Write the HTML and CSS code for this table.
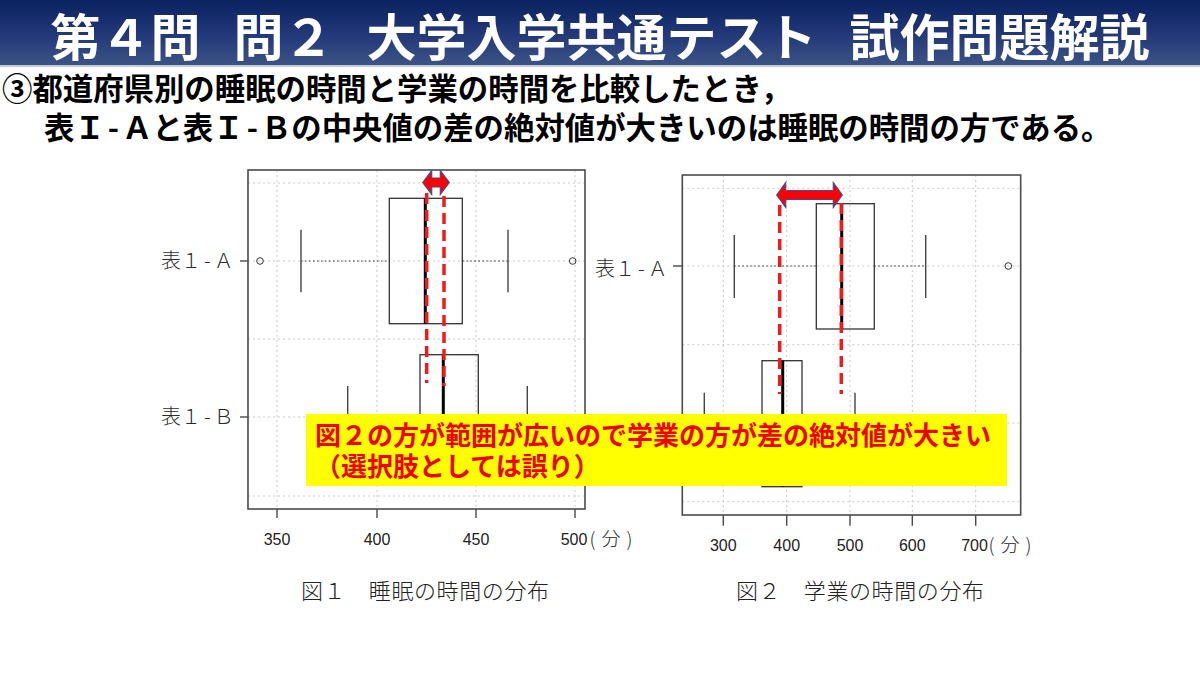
FILE: index.html
```html
<!DOCTYPE html>
<html lang="ja">
<head>
<meta charset="utf-8">
<title>第４問 問２ 大学入学共通テスト 試作問題解説</title>
<link rel="stylesheet" href="styles.css">
</head>
<body>
<header class="title-bar">
  <h1 class="title">第４問<span class="sp">　</span>問２<span class="sp">　</span>大学入学共通テスト<span class="sp">　</span>試作問題解説</h1>
</header>
<section class="statement">
  <p class="line">③都道府県別の睡眠の時間と学業の時間を比較したとき，</p>
  <p class="line indent">表Ｉ<span class="hy">-</span>Ａと表Ｉ<span class="hy">-</span>Ｂの中央値の差の絶対値が大きいのは睡眠の時間の方である。</p>
</section>
<section class="figs">
  <figure class="fig fig1">
    <svg class="plot" viewBox="150 160 440 410" width="440" height="410">
      <g class="grid">
        <line x1="277" y1="171" x2="277" y2="510"/>
        <line x1="377" y1="171" x2="377" y2="510"/>
        <line x1="476" y1="171" x2="476" y2="510"/>
        <line x1="575" y1="171" x2="575" y2="510"/>
        <line x1="248" y1="184" x2="585" y2="184"/>
        <line x1="248" y1="262" x2="585" y2="262"/>
        <line x1="248" y1="340" x2="585" y2="340"/>
        <line x1="248" y1="418" x2="585" y2="418"/>
        <line x1="248" y1="497" x2="585" y2="497"/>
      </g>
      <rect class="frame" x="248" y="171" width="337" height="339"/>
      <g class="tick">
        <line x1="240" y1="262" x2="248" y2="262"/>
        <line x1="240" y1="418" x2="248" y2="418"/>
        <line x1="277" y1="510" x2="277" y2="519"/>
        <line x1="377" y1="510" x2="377" y2="519"/>
        <line x1="476" y1="510" x2="476" y2="519"/>
        <line x1="575" y1="510" x2="575" y2="519"/>
      </g>
      <text class="ylab" x="161" y="269">表１<tspan dx="3">-</tspan><tspan dx="3">Ａ</tspan></text>
      <text class="ylab" x="161" y="425">表１<tspan dx="3">-</tspan><tspan dx="3">Ｂ</tspan></text>
      <text class="num" x="277" y="546">350</text>
      <text class="num" x="377" y="546">400</text>
      <text class="num" x="476" y="546">450</text>
      <text class="num" x="574" y="546">500</text>
      <text class="unit" x="589.5" y="547">(<tspan dx="6">分</tspan><tspan dx="6">)</tspan></text>
      <!-- box A -->
      <line class="wline" x1="301" y1="262" x2="389.3" y2="262"/>
      <line class="wline" x1="462.3" y1="262" x2="508" y2="262"/>
      <line class="whisk" x1="301" y1="230.7" x2="301" y2="293.3"/>
      <line class="whisk" x1="508" y1="230.7" x2="508" y2="293.3"/>
      <rect class="box" x="389.3" y="199.3" width="73" height="125.4"/>
      <line class="med" x1="425.3" y1="199.3" x2="425.3" y2="324.7"/>
      <circle class="out" cx="260" cy="262" r="3.3"/>
      <circle class="out" cx="572.7" cy="262" r="3.3"/>
      <!-- box B -->
      <line class="wline" x1="347.7" y1="418" x2="420" y2="418"/>
      <line class="wline" x1="478.3" y1="418" x2="527.3" y2="418"/>
      <line class="whisk" x1="347.7" y1="387" x2="347.7" y2="449"/>
      <line class="whisk" x1="527.3" y1="387" x2="527.3" y2="449"/>
      <rect class="box" x="420" y="355.7" width="58.3" height="124.6"/>
      <line class="med" x1="443.3" y1="355.7" x2="443.3" y2="480.3"/>
      <!-- annotations -->
      <line class="dash" x1="426.7" y1="194" x2="426.7" y2="384"/>
      <line class="dash" x1="444" y1="197" x2="444" y2="387"/>
      <polygon class="arrow" points="422.7,183.5 431.7,171.5 431.7,179 440.3,179 440.3,171.5 449.3,183.5 440.3,195.5 440.3,188 431.7,188 431.7,195.5"/>
    </svg>
    <figcaption class="cap">図１　睡眠の時間の分布</figcaption>
  </figure>
  <figure class="fig fig2">
    <svg class="plot" viewBox="590 160 450 410" width="450" height="410">
      <g class="grid">
        <line x1="723.3" y1="176" x2="723.3" y2="516"/>
        <line x1="786.7" y1="176" x2="786.7" y2="516"/>
        <line x1="850" y1="176" x2="850" y2="516"/>
        <line x1="912.3" y1="176" x2="912.3" y2="516"/>
        <line x1="975.7" y1="176" x2="975.7" y2="516"/>
        <line x1="682.3" y1="189.3" x2="1020.7" y2="189.3"/>
        <line x1="682.3" y1="267" x2="1020.7" y2="267"/>
        <line x1="682.3" y1="345.7" x2="1020.7" y2="345.7"/>
        <line x1="682.3" y1="424" x2="1020.7" y2="424"/>
        <line x1="682.3" y1="502.7" x2="1020.7" y2="502.7"/>
      </g>
      <rect class="frame" x="682.3" y="176" width="338.4" height="340"/>
      <g class="tick">
        <line x1="673" y1="267" x2="682.3" y2="267"/>
        <line x1="673" y1="424" x2="682.3" y2="424"/>
        <line x1="723.3" y1="516" x2="723.3" y2="526.7"/>
        <line x1="786.7" y1="516" x2="786.7" y2="526.7"/>
        <line x1="850" y1="516" x2="850" y2="526.7"/>
        <line x1="912.3" y1="516" x2="912.3" y2="526.7"/>
        <line x1="975.7" y1="516" x2="975.7" y2="526.7"/>
      </g>
      <text class="ylab" x="595" y="277">表１<tspan dx="3">-</tspan><tspan dx="3">Ａ</tspan></text>
      <text class="num" x="723.3" y="551.5">300</text>
      <text class="num" x="786.7" y="551.5">400</text>
      <text class="num" x="850" y="551.5">500</text>
      <text class="num" x="912.3" y="551.5">600</text>
      <text class="num" x="974.5" y="551.5">700</text>
      <text class="unit" x="988.5" y="552.5">(<tspan dx="6">分</tspan><tspan dx="6">)</tspan></text>
      <!-- box A -->
      <line class="wline" x1="734.3" y1="267" x2="816.3" y2="267"/>
      <line class="wline" x1="874.3" y1="267" x2="925.7" y2="267"/>
      <line class="whisk" x1="734.3" y1="236" x2="734.3" y2="299"/>
      <line class="whisk" x1="925.7" y1="236" x2="925.7" y2="299"/>
      <rect class="box" x="816.3" y="204.7" width="58" height="125.3"/>
      <line class="med" x1="841.7" y1="204.7" x2="841.7" y2="330"/>
      <circle class="out" cx="1008.3" cy="267" r="3.3"/>
      <!-- box B -->
      <line class="wline" x1="704.3" y1="424" x2="762" y2="424"/>
      <line class="wline" x1="802" y1="424" x2="855" y2="424"/>
      <line class="whisk" x1="704.3" y1="393.7" x2="704.3" y2="454.3"/>
      <line class="whisk" x1="855" y1="393.7" x2="855" y2="454.3"/>
      <rect class="box" x="762" y="361.7" width="40" height="126"/>
      <line class="med" x1="782.7" y1="361.7" x2="782.7" y2="487.7"/>
      <!-- annotations -->
      <line class="dash" x1="779.7" y1="206" x2="779.7" y2="395"/>
      <line class="dash" x1="841.3" y1="204" x2="841.3" y2="395"/>
      <polygon class="arrow" points="776.7,196 785.7,183.5 785.7,191.5 833.3,191.5 833.3,183.5 842.3,196 833.3,208.5 833.3,200.5 785.7,200.5 785.7,208.5"/>
    </svg>
    <figcaption class="cap">図２　学業の時間の分布</figcaption>
  </figure>
  <div class="callout">
    <p>図２の方が範囲が広いので学業の方が差の絶対値が大きい</p>
    <p>（選択肢としては誤り）</p>
  </div>
</section>
</body>
</html>
```
FILE: styles.css
```css
html, body {
  margin: 0;
  padding: 0;
  background: #ffffff;
}
body {
  font-family: "Noto Sans CJK JP", "Noto Sans", sans-serif;
  width: 1200px;
  height: 676px;
  overflow: hidden;
}
.title-bar {
  height: 65px;
  background: linear-gradient(180deg, #0a2260 0%, #23397a 55%, #3c5386 100%);
  border-bottom: 2px solid #c4cbd9;
}
.title {
  margin: 0;
  padding-top: 3px;
  color: #ffffff;
  font-size: 50px;
  line-height: 62px;
  font-weight: 700;
  text-align: center;
  white-space: nowrap;
}
.sp {
  letter-spacing: -17px;
}
.statement {
  margin-top: 1px;
  padding-left: 2px;
}
.line {
  margin: 0;
  font-size: 30.4px;
  line-height: 39px;
  font-weight: 700;
  color: #000000;
  white-space: nowrap;
}
.indent {
  padding-left: 42px;
}
.hy {
  margin: 0 3px;
}
.figs {
  position: relative;
  display: flex;
  padding-left: 150px;
  margin-top: 13px;
}
.fig {
  margin: 0;
}
.fig1 {
  width: 440px;
}
.fig2 {
  width: 450px;
}
.plot {
  display: block;
  overflow: visible;
}
.grid line {
  stroke: #c9c9c9;
  stroke-width: 1;
  stroke-dasharray: 2 3;
}
.frame {
  fill: none;
  stroke: #4a4a4a;
  stroke-width: 1.6;
}
.tick line {
  stroke: #4a4a4a;
  stroke-width: 1.4;
}
.box {
  fill: none;
  stroke: #333333;
  stroke-width: 1.3;
}
.whisk {
  stroke: #444444;
  stroke-width: 1.4;
}
.wline {
  stroke: #333333;
  stroke-width: 1;
  stroke-dasharray: 1.5 2.5;
}
.med {
  stroke: #000000;
  stroke-width: 3;
}
.out {
  fill: none;
  stroke: #333333;
  stroke-width: 1;
}
.num {
  font-family: "Liberation Sans", Arial, sans-serif;
  font-size: 16px;
  fill: #222222;
  text-anchor: middle;
}
.ylab {
  font-family: "Noto Sans CJK JP", sans-serif;
  font-size: 20px;
  font-weight: 300;
  fill: #2a2a2a;
}
.unit {
  font-family: "Noto Sans CJK JP", sans-serif;
  font-size: 19px;
  font-weight: 300;
  fill: #2a2a2a;
}
.dash {
  stroke: #ee1c1c;
  stroke-width: 3.5;
  stroke-dasharray: 11 6;
}
.arrow {
  fill: #ff0000;
  stroke: #3f4f8f;
  stroke-width: 1.2;
  stroke-linejoin: miter;
}
.cap {
  margin-top: 6px;
  font-size: 22px;
  line-height: 28px;
  letter-spacing: 0.6px;
  font-weight: 300;
  color: #222222;
  white-space: nowrap;
}
.fig1 .cap {
  padding-left: 151px;
}
.fig2 .cap {
  padding-left: 146px;
}
.callout {
  position: absolute;
  left: 306px;
  top: 255px;
  width: 701px;
  height: 72px;
  box-sizing: border-box;
  padding: 4px 0 0 9px;
  background: #ffff00;
  color: #f00000;
  font-size: 26px;
  line-height: 31px;
  font-weight: 700;
}
.callout p {
  margin: 0;
  white-space: nowrap;
}
```
